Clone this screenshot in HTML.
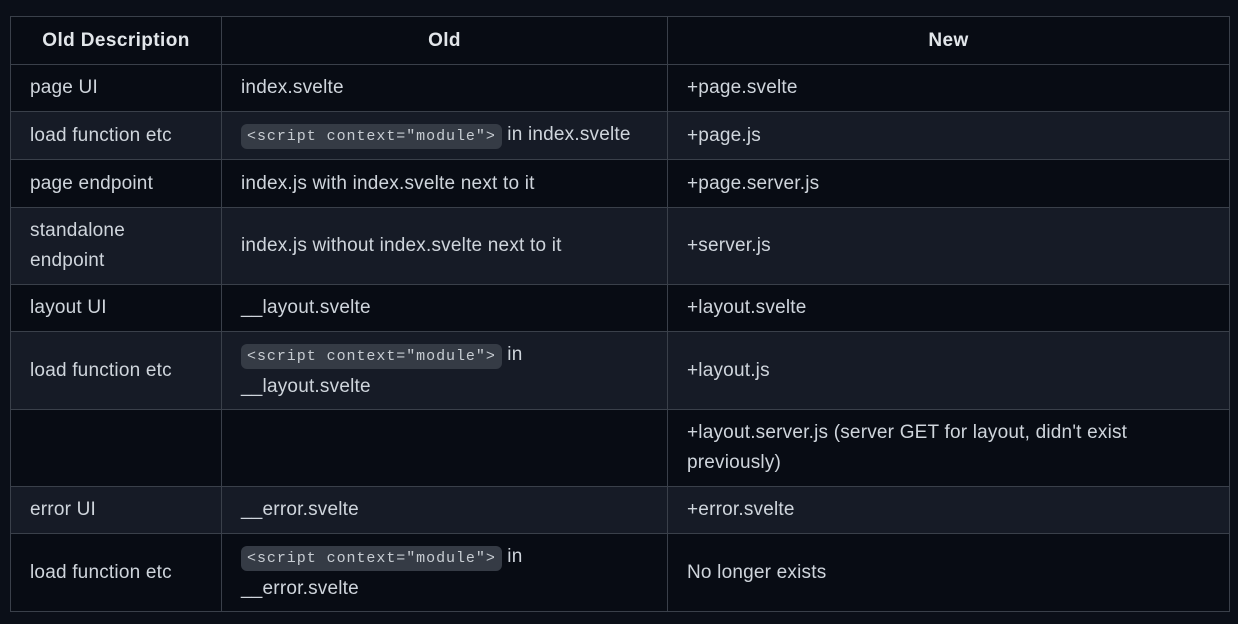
<!DOCTYPE html>
<html><head><meta charset="utf-8"><style>
html,body{margin:0;padding:0;background:#0b0f18;width:1238px;height:624px;overflow:hidden}
table{position:absolute;left:10px;top:16px;width:1219px;border-collapse:collapse;table-layout:fixed;font-family:"Liberation Sans",sans-serif;font-size:19px;color:#cfd5dc}
td,th{border:1.5px solid #3a404a;padding:0 0 0 19px;line-height:30px;vertical-align:middle;letter-spacing:0.2px}
th{font-weight:bold;text-align:center;padding:0;color:#e2e6ea;letter-spacing:0.4px}
tr.o{background:#080c14}
tr.e{background:#161b26}
code{font-family:"Liberation Mono",monospace;font-size:15px;background:#353b45;color:#c8cdd3;border-radius:6px;padding:4px 6px;letter-spacing:0.95px}
</style></head><body>
<table>
<colgroup><col style="width:211px"><col style="width:446px"><col style="width:562px"></colgroup>
<tr class="o" style="height:48px"><th>Old Description</th><th>Old</th><th>New</th></tr>
<tr class="o" style="height:47px"><td>page UI</td><td>index.svelte</td><td>+page.svelte</td></tr>
<tr class="e" style="height:48px"><td>load function etc</td><td><code>&lt;script context="module"&gt;</code> in index.svelte</td><td>+page.js</td></tr>
<tr class="o" style="height:48px"><td>page endpoint</td><td>index.js with index.svelte next to it</td><td>+page.server.js</td></tr>
<tr class="e" style="height:77px"><td>standalone<br>endpoint</td><td>index.js without index.svelte next to it</td><td>+server.js</td></tr>
<tr class="o" style="height:47px"><td>layout UI</td><td>__layout.svelte</td><td>+layout.svelte</td></tr>
<tr class="e" style="height:78px"><td>load function etc</td><td><code>&lt;script context="module"&gt;</code> in<br>__layout.svelte</td><td>+layout.js</td></tr>
<tr class="o" style="height:77px"><td></td><td></td><td>+layout.server.js (server GET for layout, didn't exist<br>previously)</td></tr>
<tr class="e" style="height:47px"><td>error UI</td><td>__error.svelte</td><td>+error.svelte</td></tr>
<tr class="o" style="height:78px"><td>load function etc</td><td><code>&lt;script context="module"&gt;</code> in<br>__error.svelte</td><td>No longer exists</td></tr>
</table>
</body></html>
